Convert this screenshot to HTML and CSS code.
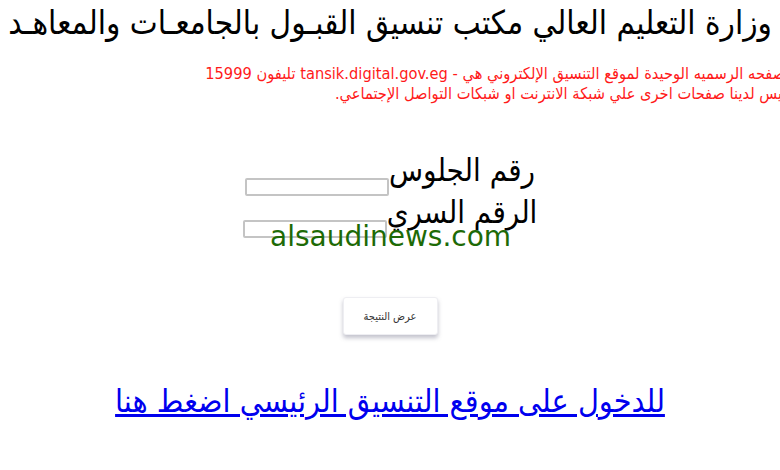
FILE: index.html
```html
<!DOCTYPE html>
<html lang="ar" dir="rtl">
<head>
<meta charset="utf-8">
<title>تنسيق</title>
<link rel="stylesheet" href="styles.css">
</head>
<body>
<div class="page">
  <h1 class="title">وزارة التعليم العالي مكتب تنسيق القبـول بالجامعـات والمعاهـد</h1>
  <p class="notice">الصفحه الرسميه الوحيدة لموقع التنسيق الإلكتروني هي - tansik.digital.gov.eg تليفون 15999<br>وليس لدينا صفحات اخرى علي شبكة الانترنت او شبكات التواصل الإجتماعي.</p>
  <form class="form">
    <div class="row">
      <label class="label" for="seat">رقم الجلوس</label>
      <input class="field" id="seat" type="text">
    </div>
    <div class="row">
      <label class="label" for="pin">الرقم السري</label>
      <input class="field" id="pin" type="password">
    </div>
    <div class="actions">
      <button class="btn" type="button">عرض النتيجة</button>
    </div>
  </form>
  <div class="linkwrap"><a class="mainlink" href="#">للدخول على موقع التنسيق الرئيسي اضغط هنا</a></div>
  <div class="watermark">alsaudinews.com</div>
</div>
</body>
</html>
```
FILE: styles.css
```css
html, body {
  margin: 0;
  padding: 0;
  background: #ffffff;
  overflow: hidden;
}
body {
  width: 780px;
  height: 470px;
  font-family: "DejaVu Sans Condensed", "DejaVu Sans", sans-serif;
  color: #000;
}
.page {
  position: relative;
  width: 780px;
  height: 470px;
}
.title {
  margin: 0;
  padding-top: 1px;
  font-size: 33px;
  font-weight: normal;
  text-align: center;
  line-height: 44px;
  white-space: nowrap;
}
.notice {
  margin: 19px -14px 0 0;
  color: #ff1a1a;
  font-size: 16.3px;
  line-height: 20px;
  text-align: right;
  white-space: nowrap;
}
.form {
  margin-top: 44px;
  display: flex;
  flex-direction: column;
  align-items: center;
}
.row {
  display: flex;
  align-items: flex-end;
  height: 42px;
}
.label {
  font-size: 31px;
  line-height: 40px;
}
.field {
  width: 138px;
  height: 12px;
  margin: 0 0 -6px 0;
  border: 2px solid #c4c4c4;
  border-radius: 2px;
  padding: 1px;
}
.actions {
  margin-top: 65px;
}
.btn {
  width: 95px;
  height: 38px;
  background: #fff;
  border: 1px solid #eeeef2;
  border-radius: 3px;
  box-shadow: 0 3px 4px rgba(80, 80, 110, 0.35);
  font-family: inherit;
  font-size: 11px;
  color: #333;
}
.linkwrap {
  margin-top: 47px;
  text-align: center;
}
.mainlink {
  font-size: 32px;
  color: #0000ee;
  text-decoration: underline;
}
.watermark {
  position: absolute;
  left: 270px;
  top: 220px;
  font-family: "DejaVu Sans", sans-serif;
  font-size: 28px;
  color: #1d6a06;
  direction: ltr;
}
```
